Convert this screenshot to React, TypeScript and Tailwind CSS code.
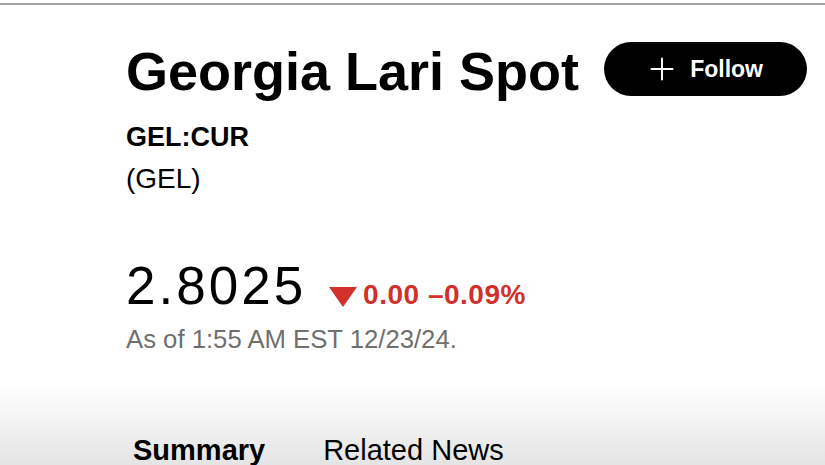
import { Plus } from 'lucide-react';

const QuoteHeader: React.FC = () => {
  return (
    <div className="h-[465px] w-full overflow-hidden bg-[linear-gradient(to_bottom,#ffffff_0%,#ffffff_83%,#e4e4e4_100%)] font-['Liberation_Sans',Arial,sans-serif] text-black">
      <div className="pt-[3px]">
        <div className="h-[2px] w-full bg-[#a3a3a3]" />
      </div>

      <div className="pl-[126px]">
        <div className="mt-[35px] flex items-start gap-[25px]">
          <h1 className="text-[54px] font-bold leading-[62px] whitespace-nowrap">
            Georgia Lari Spot
          </h1>
          <button className="mt-[2px] flex h-[54px] w-[203px] items-center justify-center gap-[10px] rounded-full bg-black pr-[4px] text-white">
            <Plus size={36} strokeWidth={1.3} />
            <span className="text-[23px] font-semibold leading-none">Follow</span>
          </button>
        </div>

        <div className="mt-[19px] text-[27px] font-bold leading-[32px]">GEL:CUR</div>
        <div className="mt-[10px] text-[28px] leading-[32px]">(GEL)</div>

        <div className="mt-[61px] flex items-baseline gap-[23px]">
          <span className="text-[53px] leading-[60px] tracking-[3px]">2.8025</span>
          <span className="text-[28px] font-semibold leading-[30px] tracking-[0.5px] text-[#d2302a] whitespace-nowrap">
            <svg width="28" height="20" viewBox="0 0 28 20" className="mr-[6px] inline-block">
              <polygon points="0,0 28,0 14,20" fill="#d2302a" />
            </svg>
            0.00 –0.09%
          </span>
        </div>

        <div className="mt-[8px] text-[25.7px] leading-[30px] text-[#6f6f6f]">
          As of 1:55 AM EST 12/23/24.
        </div>

        <div className="mt-[79px] flex gap-[58px] pl-[7px] text-[29px] leading-[34px]">
          <span className="font-bold">Summary</span>
          <span>Related News</span>
        </div>
      </div>
    </div>
  );
};

export default function App() {
  return <QuoteHeader />;
}
